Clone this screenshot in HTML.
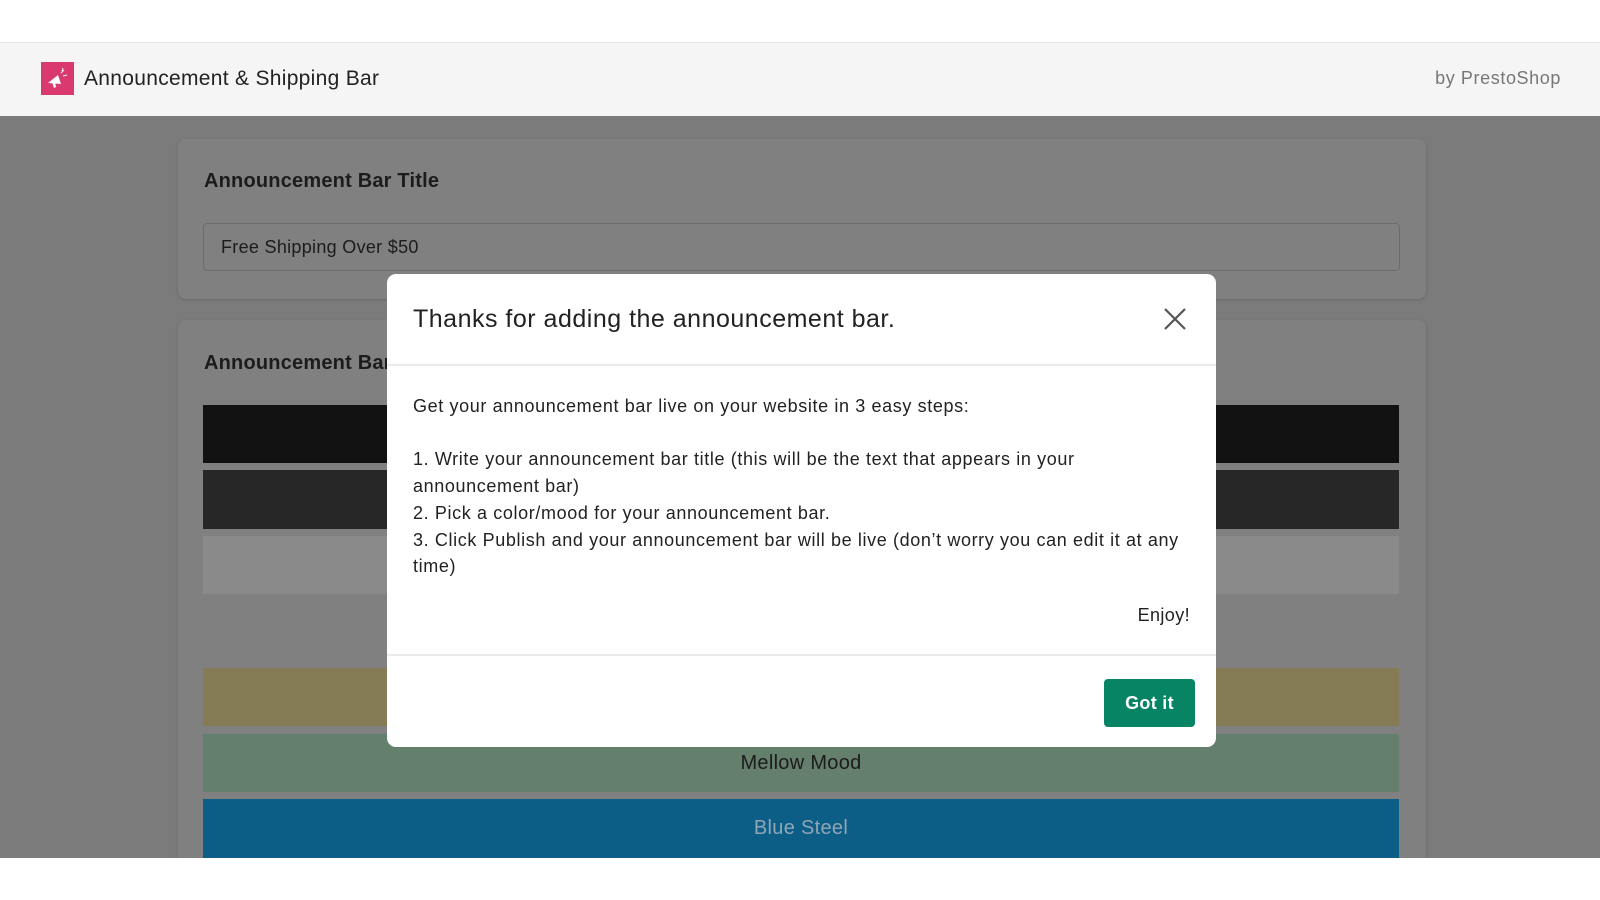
<!DOCTYPE html>
<html><head><meta charset="utf-8"><style>
*{box-sizing:border-box;margin:0;padding:0}
body{width:1600px;height:900px;background:#fff;font-family:"Liberation Sans",sans-serif;position:relative;overflow:hidden}
.hdr{position:absolute;left:0;top:42px;width:1600px;height:74px;background:#f5f5f5;border-top:1px solid #e6e6e6}
.logo{position:absolute;left:41px;top:19px;width:33px;height:33px;background:#d9396f}
.ttl{position:absolute;left:84px;top:24px;font-size:21px;color:#222;letter-spacing:0.3px}
.by{position:absolute;right:39px;top:25px;font-size:18px;color:#777;letter-spacing:0.6px}
.ov{position:absolute;left:0;top:116px;width:1600px;height:742px;background:#7b7b7b;overflow:hidden}
.card{position:absolute;left:178px;width:1248px;background:#808080;border-radius:8px;box-shadow:0 1px 3px rgba(0,0,0,.15)}
.ch{position:absolute;left:26px;font-size:20px;font-weight:bold;color:#1c1c1c;letter-spacing:0.2px}
.inp{position:absolute;left:25px;top:84px;width:1197px;height:48px;border:1px solid #6c6c6c;border-radius:4px;font-size:18px;color:#1c1c1c;padding:13px 17px;letter-spacing:0.3px}
.bar{position:absolute;left:203px;width:1196px;text-align:center;font-size:20px;line-height:58px;letter-spacing:0.3px}
.modal{position:absolute;left:387px;top:274px;width:829px;height:473px;background:#fff;border-radius:9px}
.mt{position:absolute;left:26px;top:31px;font-size:25px;color:#222;letter-spacing:0.5px}
.line{position:absolute;left:0;width:100%;height:2px;background:#ebebeb}
.mb{position:absolute;left:26px;top:119px;width:785px;font-size:18px;line-height:26.7px;color:#222;letter-spacing:0.62px}
.btn{position:absolute;left:717px;top:405px;width:91px;height:48px;background:#078463;border-radius:4px;color:#fff;font-size:18px;font-weight:bold;text-align:center;line-height:48px;letter-spacing:0.3px}
</style></head><body>
<div class="hdr">
 <div class="logo"><svg width="33" height="33" viewBox="0 0 33 33"><path d="M7 21 L17 13 L20 22 Z" fill="#fff"/><path d="M11 20 L13 26 L15 25 L14 20Z" fill="#fff"/><path d="M20 11 L23 8 M22 14 L26 13 M21 9 L22 6" stroke="#fff" stroke-width="1"/></svg></div>
 <div class="ttl">Announcement &amp; Shipping Bar</div>
 <div class="by">by PrestoShop</div>
</div>
<div class="ov">
 <div class="card" style="top:23px;height:160px"><div class="ch" style="top:31px">Announcement Bar Title</div><div class="inp">Free Shipping Over $50</div></div>
 <div class="card" style="top:204px;height:600px"><div class="ch" style="top:32px">Announcement Bar Mood</div></div>
</div>
<div class="bar" style="top:405px;height:58px;background:#121212"></div>
<div class="bar" style="top:470px;height:59px;background:#272727"></div>
<div class="bar" style="top:536px;height:58px;background:#8a8a8a"></div>
<div class="bar" style="top:668px;height:58px;background:#857c55"></div>
<div class="bar" style="top:734px;height:58px;background:#647f6b;color:#1c1c1c">Mellow Mood</div>
<div class="bar" style="top:799px;height:59px;background:#0c5e86;color:#8fa6b5">Blue Steel</div>
<div class="modal">
 <div class="mt">Thanks for adding the announcement bar.</div>
 <svg style="position:absolute;left:776px;top:33px" width="24" height="24" viewBox="0 0 24 24"><path d="M2 2L22 22M22 2L2 22" stroke="#555" stroke-width="2.2"/></svg>
 <div class="line" style="top:90px"></div>
 <div class="mb">Get your announcement bar live on your website in 3 easy steps:<br><br>1. Write your announcement bar title (this will be the text that appears in your announcement bar)<br>2. Pick a color/mood for your announcement bar.<br>3. Click Publish and your announcement bar will be live (don’t worry you can edit it at any time)</div>
 <div style="position:absolute;right:26px;top:331px;font-size:18px;color:#222;letter-spacing:0.4px">Enjoy!</div>
 <div class="line" style="top:380px"></div>
 <div class="btn">Got it</div>
</div>
</body></html>
